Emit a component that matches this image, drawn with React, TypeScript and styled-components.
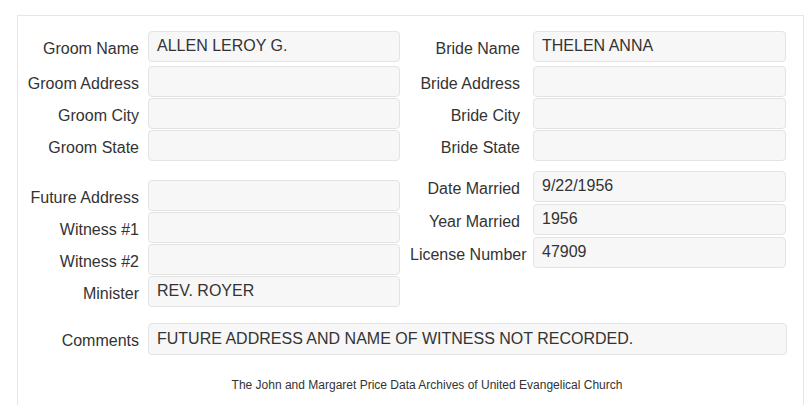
import React from "react";
import styled, { createGlobalStyle } from "styled-components";

const Global = createGlobalStyle`
  html, body { margin: 0; padding: 0; background: #fff; }
  body { font-family: "Liberation Sans", Arial, sans-serif; color: #333; }
`;

const Page = styled.div`
  padding: 15px 1px 0 17px;
`;

const Panel = styled.div`
  width: 787px;
  box-sizing: border-box;
  border: 1px solid #e6e6e6;
  border-bottom: none;
  padding: 15px 16px 20px 0;
`;

const Columns = styled.div<{ $top?: number }>`
  display: grid;
  grid-template-columns: 382px 386px;
  align-items: start;
  margin-top: ${(p) => p.$top ?? 0}px;
`;

const Column = styled.div<{ $side: "left" | "right"; $padTop?: number; $gap: number }>`
  display: flex;
  flex-direction: column;
  gap: ${(p) => p.$gap}px;
  padding-left: ${(p) => (p.$side === "right" ? 10 : 0)}px;
  padding-top: ${(p) => p.$padTop ?? 0}px;
`;

const Row = styled.div<{ $after?: number; $before?: number }>`
  display: flex;
  align-items: flex-start;
  margin-top: ${(p) => p.$before ?? 0}px;
  margin-bottom: ${(p) => p.$after ?? 0}px;
`;

const Label = styled.div<{ $side: "left" | "right" }>`
  flex: none;
  width: ${(p) => (p.$side === "left" ? 121 : 110)}px;
  margin-right: ${(p) => (p.$side === "left" ? 9 : 13)}px;
  text-align: right;
  white-space: nowrap;
  font-size: 16px;
  height: 31px;
  line-height: 27px;
  padding-top: 4px;
  box-sizing: border-box;
  color: #333;
`;

const Field = styled.div<{ $h?: number }>`
  flex: 1;
  min-width: 0;
  height: ${(p) => p.$h ?? 31}px;
  box-sizing: border-box;
  background: #f7f7f7;
  border: 1px solid #e3e3e3;
  border-radius: 4px;
  padding: 0 8px 1px 8px;
  font-size: 16px;
  line-height: ${(p) => (p.$h ?? 31) - 3}px;
  color: #333;
  white-space: nowrap;
  overflow: hidden;
`;

const Footer = styled.div`
  margin-top: 22px;
  padding-left: 49px;
  text-align: center;
  font-size: 12px;
  line-height: 16px;
  color: #333;
`;

type F = { label: string; value?: string; after?: number };

const topLeft: F[] = [
  { label: "Groom Name", value: "ALLEN LEROY G.", after: 3 },
  { label: "Groom Address" },
  { label: "Groom City" },
  { label: "Groom State" },
];
const topRight: F[] = [
  { label: "Bride Name", value: "THELEN ANNA", after: 3 },
  { label: "Bride Address" },
  { label: "Bride City" },
  { label: "Bride State" },
];
const lowLeft: F[] = [
  { label: "Future Address" },
  { label: "Witness #1" },
  { label: "Witness #2" },
  { label: "Minister", value: "REV. ROYER" },
];
const lowRight: F[] = [
  { label: "Date Married", value: "9/22/1956" },
  { label: "Year Married", value: "1956" },
  { label: "License Number", value: "47909" },
];

const Fields = ({ items, side }: { items: F[]; side: "left" | "right" }) => (
  <>
    {items.map((f) => (
      <Row key={f.label} $after={f.after}>
        <Label $side={side}>{f.label}</Label>
        <Field>{f.value ?? ""}</Field>
      </Row>
    ))}
  </>
);

export default function App() {
  return (
    <>
      <Global />
      <Page>
        <Panel>
          <Columns>
            <Column $side="left" $gap={1}>
              <Fields items={topLeft} side="left" />
            </Column>
            <Column $side="right" $gap={1}>
              <Fields items={topRight} side="right" />
            </Column>
          </Columns>
          <Columns $top={10}>
            <Column $side="left" $gap={1} $padTop={9}>
              <Fields items={lowLeft} side="left" />
            </Column>
            <Column $side="right" $gap={2}>
              <Fields items={lowRight} side="right" />
            </Column>
          </Columns>
          <Row $before={16}>
            <Label $side="left">Comments</Label>
            <Field $h={32}>FUTURE ADDRESS AND NAME OF WITNESS NOT RECORDED.</Field>
          </Row>
          <Footer>The John and Margaret Price Data Archives of United Evangelical Church</Footer>
        </Panel>
      </Page>
    </>
  );
}
